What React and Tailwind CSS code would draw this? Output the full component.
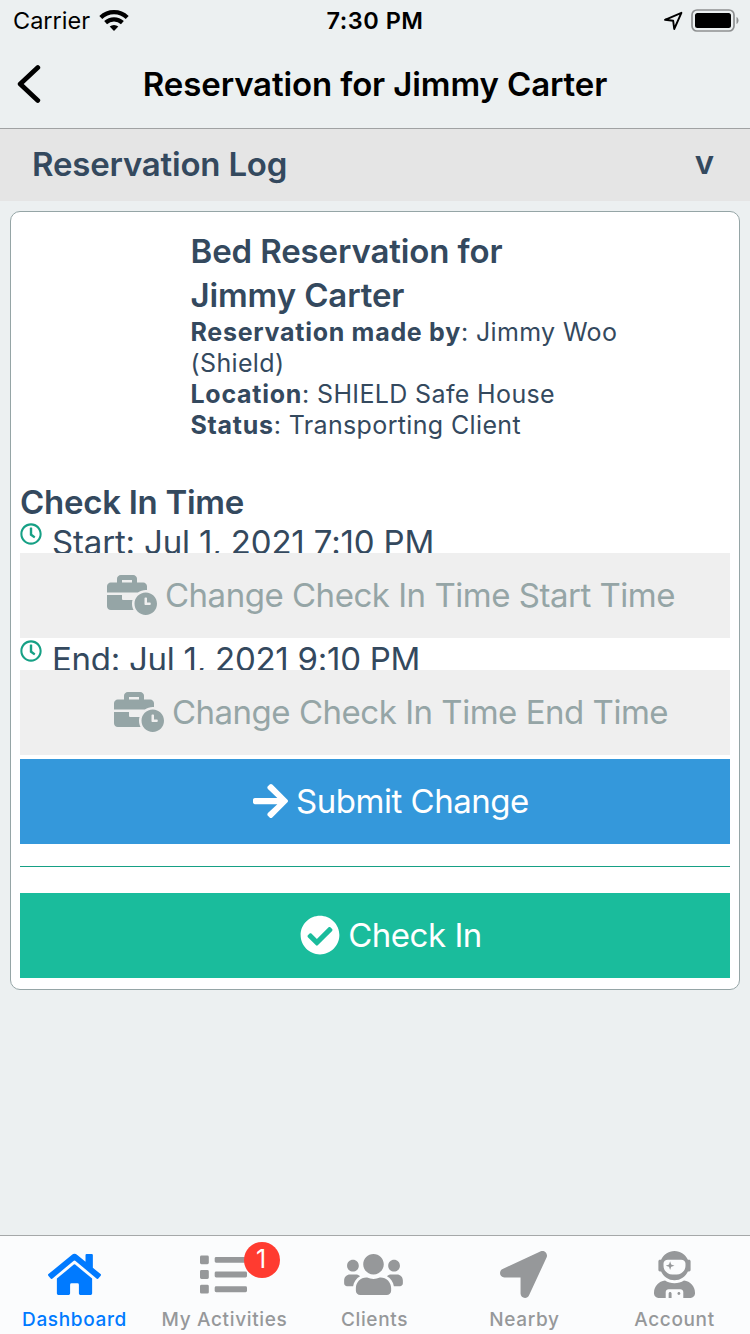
import React from 'react';
import { FaHome, FaList, FaUsers, FaLocationArrow, FaUserAstronaut, FaBusinessTime, FaArrowRight, FaCheckCircle, FaRegClock } from 'react-icons/fa';

function StatusBar() {
  return (
    <div className="flex h-10 items-center justify-between pl-[13px] pr-[11px] text-black">
      <div className="flex w-[219px] items-center gap-[9px]">
        <span className="pt-px text-[23.5px]">Carrier</span>
        <svg className="h-[22px] w-[30px]" viewBox="0 0 30 22" fill="none" stroke="#000" strokeWidth="4.2">
          <path d="M1.8 8.4a19 19 0 0 1 26.4 0" />
          <path d="M6.6 13.6a12.3 12.3 0 0 1 16.8 0" />
          <path d="M15 22l-4.3-4.5a6.6 6.6 0 0 1 8.6 0z" fill="#000" stroke="none" />
        </svg>
      </div>
      <span className="pt-px text-[23.5px] font-semibold tracking-[0.5px]">7:30 PM</span>
      <div className="flex w-[221px] items-center justify-end gap-2">
        <svg className="h-5 w-5" viewBox="0 0 20 20" fill="none" stroke="#000" strokeWidth="1.9" strokeLinejoin="round">
          <path d="M2 9.8L18.4 2.8L11.2 19L10.2 10.8Z" />
        </svg>
        <svg className="h-[23px] w-[48px]" viewBox="0 0 48 23">
          <rect x="1" y="1" width="42" height="21" rx="5" fill="none" stroke="#8e9091" strokeWidth="1.7" />
          <rect x="4" y="4" width="36" height="15" rx="2.5" fill="#000" />
          <path d="M45.5 8c2.7 1.2 2.7 5.8 0 7z" fill="#8e9091" />
        </svg>
      </div>
    </div>
  );
}

function Header() {
  return (
    <div className="flex h-[89px] shrink-0 items-center border-b border-[#a0a2a3] px-[17px] text-black">
      <svg className="h-[38px] w-6" viewBox="0 0 24 38" fill="none" stroke="#000" strokeWidth="4.8" strokeLinecap="round" strokeLinejoin="round">
        <path d="M20.8 2.6L3.2 19L20.8 35.4" />
      </svg>
      <h1 className="flex-1 pt-[2px] pr-6 text-center text-[33px] font-semibold tracking-[-0.12px]">Reservation for Jimmy Carter</h1>
    </div>
  );
}

function TimeRow({ text, tracking }) {
  return (
    <div className="flex h-8 items-start gap-[10px] overflow-hidden">
      <FaRegClock className="mt-[2px] size-[22px] shrink-0 text-[#16a085]" />
      <span className={'whitespace-nowrap text-[33px] leading-[43px] ' + tracking}>{text}</span>
    </div>
  );
}

function Button({ icon, text, tone }) {
  return (
    <button className={'flex h-[85px] w-full items-center justify-center gap-2 pb-[2px] pl-8 text-[33px] tracking-[-0.48px] ' + tone}>
      {icon}
      <span className="pt-[2px]">{text}</span>
    </button>
  );
}

const tabs = [
  { label: 'Dashboard', Icon: FaHome, size: 'h-[47px] w-[53px]', shift: 'mr-[2px]', active: true },
  { label: 'My Activities', Icon: FaList, size: 'h-[47px] w-[47px]', shift: 'mr-[3px]', badge: 1 },
  { label: 'Clients', Icon: FaUsers, size: 'h-[47px] w-[59px]', shift: 'mr-[4px]' },
  { label: 'Nearby', Icon: FaLocationArrow, size: 'h-[47px] w-[47px]', shift: 'mr-[3px]' },
  { label: 'Account', Icon: FaUserAstronaut, size: 'h-[47px] w-[41px]', shift: 'mr-[2px]' },
];

function TabBar() {
  return (
    <nav className="mt-auto flex h-[99px] shrink-0 border-t border-[#a5a8a9] bg-[#fbfcfd]">
      {tabs.map(({ label, Icon, size, shift, badge, active }) => (
        <div key={label} className={'flex w-[150px] flex-col items-center pt-[15px] ' + (active ? 'text-[#007aff]' : 'text-[#96989a]')}>
          <div className={'relative ' + shift}>
            <Icon className={size} />
            {badge && <span className="absolute -top-[9px] left-[44px] flex size-9 items-center justify-center rounded-full bg-[#ff3b30] pr-[2px] text-[25px] text-white">{badge}</span>}
          </div>
          <span className="mt-[7px] mr-px whitespace-nowrap text-[19px] leading-[30px] font-medium tracking-[0.65px]">{label}</span>
        </div>
      ))}
    </nav>
  );
}

function Detail({ name, value }) {
  return (
    <p className="tracking-[0.36px]">
      <b className="tracking-[0.72px]">{name}</b>: {value}
    </p>
  );
}

export default function App() {
  return (
    <div className="flex h-[1334px] w-[750px] flex-col bg-[#ecf0f1] font-['Inter',sans-serif] text-[#34495e]">
      <StatusBar />
      <Header />
      <div className="flex h-[72px] shrink-0 items-center justify-between bg-[#e5e5e5] pl-8 pr-9 text-[33px] font-semibold">
        <span className="tracking-[-0.2px]">Reservation Log</span>
        <span className="pb-[5px]">v</span>
      </div>
      <main className="mx-[10px] mt-[10px] h-[779px] shrink-0 rounded-[10px] border border-[#95a5a6] bg-white px-[9px] pt-[17px]">
        <div className="h-[251px] pl-[170.5px] pr-[80px] text-[25px] leading-[31px]">
          <h2 className="pr-[100px] text-[33px] font-semibold leading-[44px] tracking-[-0.12px]">Bed Reservation for Jimmy Carter</h2>
          <Detail name="Reservation made by" value="Jimmy Woo (Shield)" />
          <Detail name="Location" value="SHIELD Safe House" />
          <Detail name="Status" value="Transporting Client" />
        </div>
        <h2 className="h-[41px] text-[33px] font-semibold leading-[44px] tracking-[-0.28px]">Check In Time</h2>
        <TimeRow text="Start: Jul 1, 2021 7:10 PM" tracking="tracking-[-0.16px]" />
        <Button tone="bg-[#efefef] text-[#95a5a6]" icon={<FaBusinessTime className="h-10 w-[50px] shrink-0" />} text="Change Check In Time Start Time" />
        <TimeRow text="End: Jul 1, 2021 9:10 PM" tracking="tracking-[-0.26px]" />
        <Button tone="bg-[#efefef] text-[#95a5a6]" icon={<FaBusinessTime className="h-10 w-[50px] shrink-0" />} text="Change Check In Time End Time" />
        <div className="h-1" />
        <Button tone="bg-[#3498db] text-white" icon={<FaArrowRight className="h-10 w-[35px] shrink-0" />} text="Submit Change" />
        <hr className="mt-[22px] mb-[26px] border-t border-[#16a085]" />
        <Button tone="bg-[#1abc9c] text-white" icon={<FaCheckCircle className="size-10 shrink-0" />} text="Check In" />
      </main>
      <TabBar />
    </div>
  );
}
